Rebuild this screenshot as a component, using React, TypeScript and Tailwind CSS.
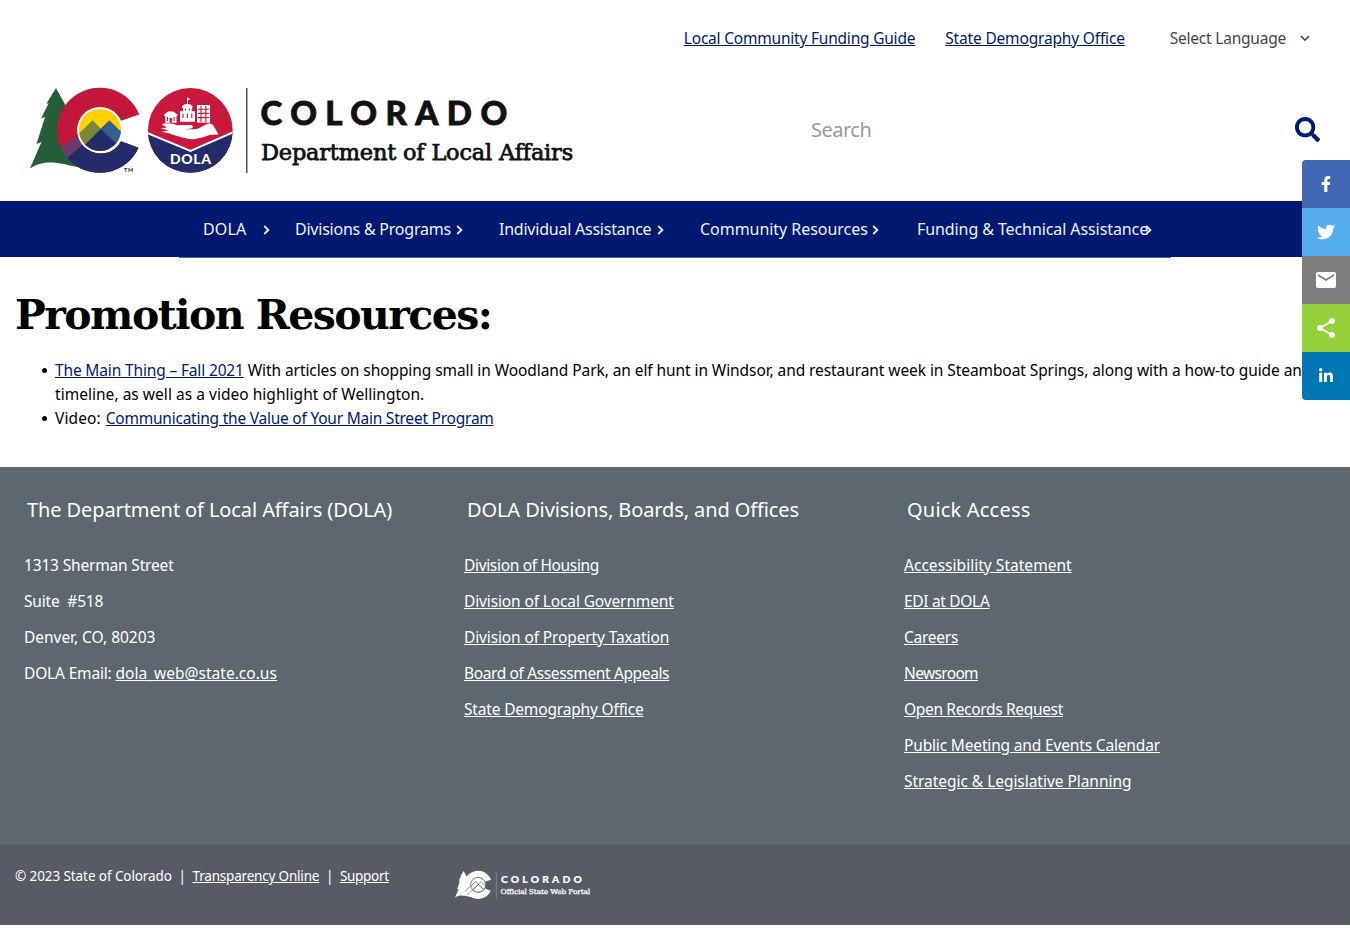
import type { ReactNode } from "react";
import { FaFacebookF, FaLinkedinIn, FaSearch, FaTwitter } from "react-icons/fa";
import { MdEmail, MdShare } from "react-icons/md";

const TREE =
  "M56 88 L46.5 103.5 L48.5 103.5 L41 118.5 L45 117 L36.5 144 L41.5 142 L30 168.5 C42 161 52 162 64 164 C72 166 78 167.5 86 167.5 L80 110 L67 108 Z";
const C_SHAPE =
  "M139.3 114.5 A42.6 42.6 0 1 0 138.6 147.7 L121 141.3 A22.5 22.5 0 1 1 121 120.7 Z";

function HeaderLogo() {
  return (
    <svg viewBox="30 86 546 90" className="mt-0.5 h-[90px] w-[546px]" role="img" aria-label="Colorado Department of Local Affairs">
      <defs>
        <clipPath id="cee"><path d={C_SHAPE} /></clipPath>
        <clipPath id="inner"><circle cx="100" cy="130" r="21" /></clipPath>
        <clipPath id="badge"><circle cx="190.3" cy="130.4" r="42.4" /></clipPath>
      </defs>
      <path d={TREE} fill="#245d38" />
      <path d={C_SHAPE} fill="#c3163b" />
      <g clipPath="url(#cee)">
        <path d="M80 134 L62 147 L50 160 L72 180 L100 130 Z" fill="#6d3a6d" />
        <path d="M100 129.5 L66 159 L66 176 L150 176 L150 138 L121 138 Z" fill="#232c68" />
      </g>
      <circle cx="100" cy="130" r="22.9" fill="#fff" />
      <g clipPath="url(#inner)">
        <rect x="77" y="107" width="46" height="46" fill="#ffd100" />
        <path d="M92.7 120.3 L70 142 L92 150 L106 134 Z" fill="#7a8638" />
        <path d="M109.3 120.3 L94 135 L112 146 L130 140 Z" fill="#35608b" />
        <path d="M101 129.3 L76 153 L126 153 Z" fill="#232c68" />
      </g>
      <text x="124" y="171.5" fontFamily="Lato" fontWeight="700" fontSize="5.5" fill="#222" textLength="9">TM</text>

      <g clipPath="url(#badge)">
        <rect x="147" y="87" width="87" height="87" fill="#c8193c" />
        <path d="M147 132.5 L190.5 150.5 L234 131.5 V174 H147 Z" fill="#232c68" />
        <path d="M147 133 L190.5 151 L234 132" fill="none" stroke="#fff" strokeWidth="2" />
      </g>
      <g fill="#fff">
        <path d="M161.5 124.3 C167 122.6 172 123.2 177 125.2 L191 125 C193.5 125.5 193.5 128 191 128.4 L184 129.6 L197 129 L207 124 C210 122.6 212.5 124 214 126.5 L218.5 134.5 L210 134.8 C203 137.5 196 139.8 189 139 C180 137.5 171 133.5 161.5 131.5 L169 130.5 L160.5 128.2 L167 127.6 Z" />
        <path d="M164 114.8 L168 111.4 H173.5 L177.5 114.8 V116 H176.5 V122.7 H165.3 V116 H164 Z" />
        <path d="M180 111.3 H183 V108 H182 V106.6 C183 104.8 185 104 187 104 V97.5 L190.5 99 L187.8 100.4 V104 C190 104 192 105 192.5 106.6 V108 H191.7 V111.3 H195 V121.7 H180 Z" />
        <path d="M197 105 H210 V122.6 H197 Z" />
      </g>
      <path d="M167.5 117 V121 M174 117 V121 M183 113.5 V118 M187.4 113.5 V118 M191.8 113.5 V118 M185.5 108.5 V110.5 M189.3 108.5 V110.5 M201 106 V122 M205.8 106 V122 M198 109.2 H209.2 M198 113.4 H209.2 M198 117.6 H209.2" stroke="#c8193c" strokeWidth="1.1" />
      <path d="M169.6 122.7 V118 H172 V122.7 Z" fill="#c8193c" />
      <text x="170" y="163.7" fontFamily="Lato" fontWeight="900" fontSize="14" fill="#fff" textLength="41" lengthAdjust="spacing">DOLA</text>

      <path d="M246.8 88 V173" stroke="#2b2b2b" strokeWidth="1.2" />
      <text x="260.5" y="125" fontFamily="Lato" fontWeight="900" fontSize="33" fill="#111" stroke="#111" strokeWidth="0.8" textLength="246.5" lengthAdjust="spacing">COLORADO</text>
      <text x="261" y="160.2" fontFamily="DejaVu Serif" fontWeight="400" fontSize="21.5" fill="#111" stroke="#111" strokeWidth="0.75" textLength="312" lengthAdjust="spacingAndGlyphs">Department of Local Affairs</text>
    </svg>
  );
}

function PortalLogo() {
  return (
    <svg viewBox="455 870 136 30" className="h-[30px] w-[136px]" role="img" aria-label="Colorado Official State Web Portal">
      <g transform="translate(445.1 841.9) scale(0.33)">
        <path d={TREE} fill="#fff" />
        <path d={C_SHAPE} fill="#fff" />
        <circle cx="100" cy="130" r="23" fill="#fff" />
        <path d="M60 150 L92.7 120.3 L116 143 M86 143 L109.3 120.3 L121 132 M66 161 L101 129.3 L118 145" fill="none" stroke="#565b66" strokeWidth="2" />
        <circle cx="100" cy="130" r="22.6" fill="none" stroke="#565b66" strokeWidth="2.4" />
      </g>
      <path d="M496.3 871 V899" stroke="#8b8f97" strokeWidth="0.8" />
      <text x="501" y="883.2" fontFamily="Lato" fontWeight="900" fontSize="10.2" fill="#fff" stroke="#fff" strokeWidth="0.2" textLength="80.5" lengthAdjust="spacing">COLORADO</text>
      <text x="500.5" y="894.4" fontFamily="DejaVu Serif" fontWeight="400" fontSize="6.8" fill="#fff" stroke="#fff" strokeWidth="0.25" textLength="89.5" lengthAdjust="spacingAndGlyphs">Official State Web Portal</text>
    </svg>
  );
}

const navItems = [
  { label: "DOLA", box: "ml-[203px] w-[67px] tracking-[0.15px]" },
  { label: "Divisions & Programs", box: "ml-[25px] w-[168px] tracking-[-0.23px]" },
  { label: "Individual Assistance", box: "ml-[36px] w-[165px] tracking-[-0.23px]" },
  { label: "Community Resources", box: "ml-[36px] w-[179px] tracking-[-0.04px]" },
  { label: "Funding & Technical Assistance", box: "ml-[38px] w-[235px] tracking-[-0.09px]" },
];

const divisions = [
  { label: "Division of Housing", spacing: "tracking-[-0.33px]" },
  { label: "Division of Local Government", spacing: "tracking-[-0.13px]" },
  { label: "Division of Property Taxation", spacing: "tracking-[-0.13px]" },
  { label: "Board of Assessment Appeals", spacing: "tracking-[-0.37px]" },
  { label: "State Demography Office", spacing: "tracking-[-0.17px]" },
];

const quickLinks = [
  { label: "Accessibility Statement", spacing: "tracking-[0.03px]" },
  { label: "EDI at DOLA", spacing: "tracking-[-0.32px]" },
  { label: "Careers", spacing: "tracking-[-0.25px]" },
  { label: "Newsroom", spacing: "tracking-[-0.65px]" },
  { label: "Open Records Request", spacing: "tracking-[-0.33px]" },
  { label: "Public Meeting and Events Calendar", spacing: "tracking-[-0.16px]" },
  { label: "Strategic & Legislative Planning", spacing: "tracking-[-0.04px]" },
];

function FooterColumn({ title, spacing, children }: { title: string; spacing: string; children: ReactNode }) {
  return (
    <div className="w-[440px] shrink-0 pl-6 pt-[29px]">
      <h2 className={`pl-[3px] text-[20px] leading-7 ${spacing}`}>{title}</h2>
      <ul className="mt-[29px] space-y-3">{children}</ul>
    </div>
  );
}

function FooterLinks({ items }: { items: { label: string; spacing: string }[] }) {
  return items.map(({ label, spacing }) => (
    <li key={label} className={spacing}>
      <a href="#" className="underline underline-offset-1">{label}</a>
    </li>
  ));
}

function Bullet() {
  return <span className="mr-2 mt-[10px] size-[5px] shrink-0 rounded-full bg-black" />;
}

export default function App() {
  return (
    <div className="relative w-[1350px] overflow-hidden bg-white font-['Noto_Sans',sans-serif] text-[15.5px] leading-6 tracking-[-0.17px] text-black">
      <header className="h-[201px]">
        <div className="flex h-[76px] items-center justify-end pr-10 text-[#001970]">
          <a href="#" className="tracking-[-0.21px] underline underline-offset-1">Local Community Funding Guide</a>
          <a href="#" className="ml-[30px] underline underline-offset-1">State Demography Office</a>
          <button className="ml-[45px] flex items-center text-[#444]">
            <span className="tracking-[-0.22px]">Select Language</span>
            <svg viewBox="0 0 10 7" className="ml-[14px] mt-px h-[7px] w-[10px]" fill="none" stroke="currentColor" strokeWidth="1.6"><path d="M1 1 L5 5.2 L9 1" /></svg>
          </button>
        </div>
        <div className="flex h-[108px] items-center px-[30px]">
          <HeaderLogo />
          <form className="ml-[235px] flex flex-1 items-center justify-between">
            <span className="text-[20px] leading-7 tracking-[-0.5px] text-[#999]">Search</span>
            <button type="button" aria-label="Search"><FaSearch className="mb-0.5 size-[25px] text-[#001970]" /></button>
          </form>
        </div>
      </header>

      <nav className="flex h-14 items-center bg-[#001970] text-[16px] text-[#edf2ff]">
        {navItems.map(({ label, box }) => (
          <a key={label} href="#" className={`flex shrink-0 items-center ${box}`}>
            <span className="w-0 grow whitespace-nowrap">{label}</span>
            <svg viewBox="0 0 7 10" className="mt-0.5 h-[10px] w-[7px] shrink-0" fill="none" stroke="currentColor" strokeWidth="1.8"><path d="M1.2 1 L5.4 5 L1.2 9" /></svg>
          </a>
        ))}
      </nav>
      <div className="ml-[179px] h-px w-[992px] bg-[#4d5c93]" />

      <main className="h-[209px] px-[15px] pt-[29px]">
        <h1 className="font-['DejaVu_Serif',serif] text-[41px] font-bold leading-[56px] tracking-[-1.57px]">Promotion Resources:</h1>
        <ul className="mt-[15px] pl-[27px]">
          <li className="flex">
            <Bullet />
            <p className="whitespace-nowrap tracking-[-0.08px]">
              <a href="#" className="tracking-[-0.15px] text-[#001970] underline underline-offset-1">The Main Thing – Fall 2021</a> With articles on shopping small in Woodland Park, an elf hunt in Windsor, and restaurant week in Steamboat Springs, along with a how-to guide and
              <br />
              <span className="tracking-[0.03px]">timeline, as well as a video highlight of Wellington.</span>
            </p>
          </li>
          <li className="flex">
            <Bullet />
            <p>
              <span className="mr-[5px] tracking-[0.1px]">Video:</span>
              <a href="#" className="tracking-[-0.23px] text-[#001970] underline underline-offset-1">Communicating the Value of Your Main Street Program</a>
            </p>
          </li>
        </ul>
      </main>

      <footer className="text-white">
        <div className="flex h-[378px] bg-[#5c6770]">
          <FooterColumn title="The Department of Local Affairs (DOLA)" spacing="tracking-[-0.1px]">
            <li>1313 Sherman Street</li>
            <li className="whitespace-pre">{"Suite  #518"}</li>
            <li className="tracking-[-0.03px]">Denver, CO, 80203</li>
            <li>DOLA Email: <a href="#" className="tracking-[0.02px] underline underline-offset-1">dola_web@state.co.us</a></li>
          </FooterColumn>
          <FooterColumn title="DOLA Divisions, Boards, and Offices" spacing="tracking-[-0.11px]">
            <FooterLinks items={divisions} />
          </FooterColumn>
          <FooterColumn title="Quick Access" spacing="tracking-[0.2px]">
            <FooterLinks items={quickLinks} />
          </FooterColumn>
        </div>
        <div className="flex h-20 bg-[#565b66] text-[13.5px]">
          <p className="w-[455px] shrink-0 whitespace-pre pl-[15px] pt-[19px]">
            <span className="tracking-[-0.09px]">© 2023 State of Colorado</span>{"  |  "}
            <a href="#" className="tracking-[-0.19px] underline underline-offset-1">Transparency Online</a>{"  |  "}
            <a href="#" className="tracking-[-0.3px] underline underline-offset-1">Support</a>
          </p>
          <div className="pt-[25px]"><PortalLogo /></div>
        </div>
      </footer>

      <aside className="absolute right-0 top-40 w-12 overflow-hidden rounded-l-[4px] text-white">
        <a href="#" aria-label="Facebook" className="flex size-12 items-center justify-center bg-[#4267b2]"><FaFacebookF className="size-4" /></a>
        <a href="#" aria-label="Twitter" className="flex size-12 items-center justify-center bg-[#55acee]"><FaTwitter className="size-[18px]" /></a>
        <a href="#" aria-label="Email" className="flex size-12 items-center justify-center bg-[#7d7d7d]"><MdEmail className="size-6" /></a>
        <a href="#" aria-label="Share" className="flex size-12 items-center justify-center bg-[#95d03a]"><MdShare className="size-6" /></a>
        <a href="#" aria-label="LinkedIn" className="flex size-12 items-center justify-center bg-[#0077b5]"><FaLinkedinIn className="size-4" /></a>
      </aside>
    </div>
  );
}
